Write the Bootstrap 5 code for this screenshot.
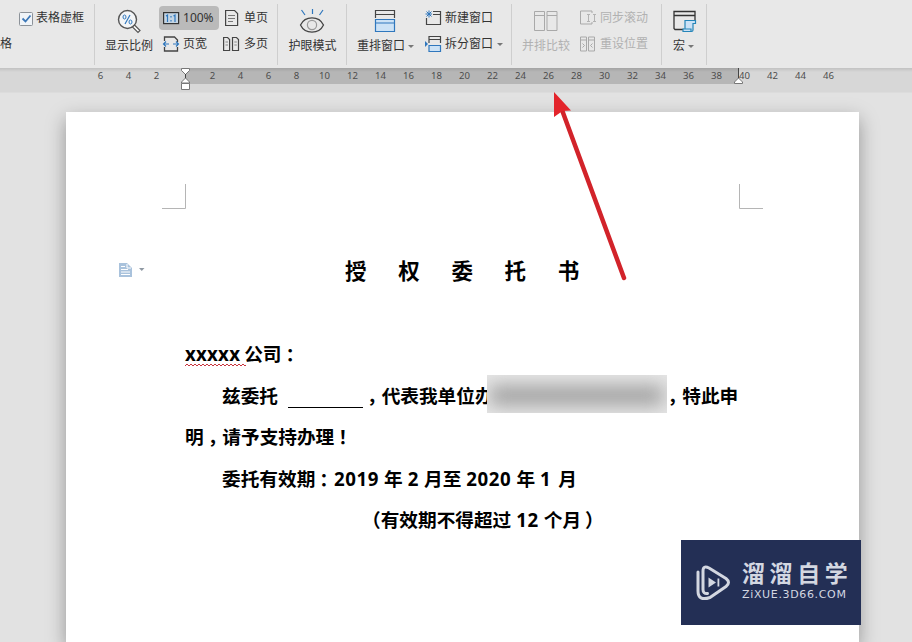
<!DOCTYPE html>
<html lang="zh-CN">
<head>
<meta charset="utf-8">
<meta name="viewport" content="width=device-width, initial-scale=1">
<title>授权委托书</title>
<link href="https://cdn.jsdelivr.net/npm/bootstrap@5.3.0/dist/css/bootstrap.min.css" rel="stylesheet">
<style>
body{width:912px;height:642px;background:#e2e2e2;font-family:"Noto Sans","Noto Sans CJK SC",sans-serif;font-size:12px;line-height:16px;color:#333}
svg{display:block;flex:none;fill:none;overflow:visible}
.ribbon{height:68px;background:#e8e8e8}
.group{flex:none;position:relative;height:68px;box-sizing:border-box}
.group::after{content:"";position:absolute;right:0;top:4px;width:1px;height:61px;background:#cecece}
.g1{width:95px}.g2{width:183px;padding-left:10px}.g3{width:69px}.g4{width:165px;padding-left:10px}.g5{width:150px;padding-left:10px}.g6{width:45px;padding-left:11px}
.tool{height:24px;gap:4px;white-space:nowrap;font-size:12px}
.tool-rows{padding-top:6px;gap:2px}
.zoom-rows{margin-left:6px;width:60px}
.page-rows{margin-left:5px}
.window-rows{margin-left:11px}
.sync-rows{margin-left:10px}
.check-box{margin:0 -1px 0 4px}
.arrange-icon{margin-left:17px}
.tool-big{padding-top:9px;white-space:nowrap}
.tool-big .cap{margin-top:5px}
.cap .tri{margin-left:-1px}
.active-tool{background:#bababa;border-radius:4px}
.off{color:#b1b1b1}
.tri{width:0;height:0;border:3px solid transparent;border-top:3.5px solid #777;border-bottom:0}
.ruler{height:25px;background:#d7d7d7;border-bottom:1px solid #dcdcdc}
.ruler-active{height:16px;margin-left:185px;width:553px;background:#b6b6b6}
.ruler-top{background:linear-gradient(#0000001a,transparent 4px)}
.ticks{top:0;left:86.6px;height:16px}
.ticks span{width:28px;text-align:center;font-size:9.6px;line-height:16px;color:#4d4d4d}
.sheet{margin:19px 0 0 66px;width:793px;height:530px;background:#fff;box-shadow:0 7px 18px #00000058;color:#000}
.doc-body{padding:221px 0 0 119px;font-weight:700;font-size:18.67px}
.doc-line{height:41.5px;line-height:41.5px;white-space:nowrap}
.heading-line{padding-left:279px;padding-top:144px;margin-bottom:-222px;height:222px;font-size:21.5px;line-height:30px;letter-spacing:31.7px;font-weight:700;white-space:nowrap}
.indent{padding-left:37px}.indent-far{padding-left:177px}
.num{margin-right:5px;letter-spacing:.6px}
.pre{margin-right:5px}
.mis-typed{letter-spacing:.25px;margin-right:4px}
.squiggle{top:30px}
.punct{display:inline-block;margin:0 -4px 0 4px}
.after-gap{margin-left:170px}
.last-month{margin-left:2px}
.blank-line{width:75px;height:1.4px;background:#000;margin:0 0 8px 10px;align-self:flex-end}
.redacted{width:180px;height:38px;background:#e6e6e6;left:487px;top:375px;overflow:hidden}
.redacted::before{content:"";position:absolute;inset:11px 4px 8px 3px;background:#9f9f9f;filter:blur(9px)}
.brand-box{left:681px;top:540px;width:180px;height:85px;background:#232f55;color:#d3d7e1;padding:0 0 0 15px}
.brand-text{margin-left:11px}
.brand-name{font:700 23px/23px "Noto Sans CJK SC",sans-serif;letter-spacing:4.6px;white-space:nowrap;margin-top:-4px}
.brand-url{font:11px/13px "DejaVu Sans",sans-serif;letter-spacing:.65px;white-space:nowrap;margin-top:4px}
</style>
<script src="https://cdn.jsdelivr.net/npm/bootstrap@5.3.0/dist/js/bootstrap.bundle.min.js"></script>
</head>
<body class="position-relative overflow-hidden">
<header class="ribbon d-flex">
  <div class="group g1">
    <div class="tool-rows d-flex flex-column">
      <div class="tool d-flex align-items-center ps-3"><svg class="check-box" width="13" height="13"><rect x="-.5" y=".5" width="13" height="13" rx="1" fill="#f0f4f8" stroke="#8c9299"/><path d="M2.5 6.5l3 3 5-6" stroke="#3d78b8" stroke-width="1.8"/></svg><span>表格虚框</span></div>
      <div class="tool d-flex align-items-center">格</div>
    </div>
  </div>
  <div class="group g2 d-flex">
    <div class="tool-big d-flex flex-column align-items-center"><svg width="24" height="24"><circle cx="10.5" cy="10.5" r="9" fill="#f3f5f7" stroke="#555" stroke-width="1.4"/><path d="M17.500 16l5.500 5.500-2 2-5.500-5.500z" fill="#fff" stroke="#555" stroke-width="1.200"/><path d="M13 6l-5 9" stroke="#2f77bd" stroke-width="1.200"/><ellipse cx="7.500" cy="8" rx="1.500" ry="2" stroke="#2f77bd"/><ellipse cx="13.500" cy="13" rx="1.500" ry="2" stroke="#2f77bd"/></svg><span class="cap">显示比例</span></div>
    <div class="tool-rows zoom-rows d-flex flex-column">
      <div class="tool active-tool d-flex align-items-center px-1"><svg width="16" height="16"><rect x=".6" y="2.600" width="15" height="11" fill="#c4d5e4" stroke="#333" stroke-width="1.2"/><path d="M3 6l1.500-1v7M10.500 6l1.500-1v7M8 6v1.500M8 10v1.500" stroke="#2f77bd" stroke-width="1.2"/></svg><span>100%</span></div>
      <div class="tool d-flex align-items-center px-1"><svg width="16" height="16"><path d="M1.500 5V1h10l3 3v2M1.500 11v4h13v-4" stroke="#444" stroke-width="1.3"/><path d="M6 8H.5M3 5.500L.5 8 3 10.500M10 8h5.500M13 5.500L15.500 8 13 10.500" stroke="#2f77bd" stroke-width="1.2"/></svg><span>页宽</span></div>
    </div>
    <div class="tool-rows page-rows d-flex flex-column">
      <div class="tool d-flex align-items-center"><svg width="16" height="16"><path d="M1.600 .5h9l3 3v12h-12z" stroke="#444" stroke-width="1.2"/><path d="M4 5.500h7M4 8.500h7M4 11.500h5" stroke="#777"/></svg><span>单页</span></div>
      <div class="tool d-flex align-items-center"><svg width="16" height="16"><path d="M-.4 1.500h4l2 2v11h-6zM8.500 1.500h4l2 2v11h-6z" stroke="#444" stroke-width="1.2"/><path d="M1.500 6h2.500M1.500 9h2.500M10.300 6h2.500M10.300 9h2.500" stroke="#888"/></svg><span>多页</span></div>
    </div>
  </div>
  <div class="group g3 d-flex justify-content-center">
    <div class="tool-big d-flex flex-column align-items-center"><svg width="24" height="24"><path d="M.5 16C5 6.500 19 6.500 23.500 16 19 25.500 5 25.500.5 16z" stroke="#444" stroke-width="1.3"/><circle cx="12" cy="16" r="4.600" stroke="#999" stroke-width="1.200"/><path d="M1.500 1l3.500 5M12.500 0v5M23 1l-3.500 5" stroke="#2f77bd" stroke-width="1.200"/></svg><span class="cap">护眼模式</span></div>
  </div>
  <div class="group g4 d-flex">
    <div class="tool-big d-flex flex-column"><svg class="arrange-icon" width="24" height="24"><path d="M1.500 9V1.500h19V9M1.500 5.500h19" stroke="#444" stroke-width="1.200"/><path d="M1.500 10.500h19v12h-19zM1.500 14h19" fill="#cce2f6" stroke="#2f77bd" stroke-width="1.200"/></svg><span class="cap d-flex align-items-center gap-1">重排窗口<i class="tri"></i></span></div>
    <div class="tool-rows window-rows d-flex flex-column">
      <div class="tool d-flex align-items-center"><svg width="16" height="16"><path d="M8 1.500h7.500v13h-14V8M8 4.500h7.500" stroke="#444" stroke-width="1.200"/><path d="M.5 4H7M4 .5v7M1.500 1.500l5 5M6.500 1.500l-5 5" stroke="#2f77bd"/></svg><span>新建窗口</span></div>
      <div class="tool d-flex align-items-center"><svg width="16" height="16"><path d="M4 7V.5h11.500V7M4 3.500h11.500" stroke="#444" stroke-width="1.200"/><path d="M4 9.500h11.500v6H4z" fill="#cce2f6" stroke="#2f77bd" stroke-width="1.200"/><path d="M0 5l3 3-3 3z" fill="#2f77bd"/></svg><span>拆分窗口</span><i class="tri"></i></div>
    </div>
  </div>
  <div class="group g5 d-flex off">
    <div class="tool-big d-flex flex-column align-items-center"><svg width="24" height="24"><path d="M.5 2.500h10v19H.5zM13 2.500h10v19H13zM.5 6.500h10M13 6.500h10" stroke="#a9a9a9"/></svg><span class="cap">并排比较</span></div>
    <div class="tool-rows sync-rows d-flex flex-column">
      <div class="tool d-flex align-items-center"><svg width="16" height="16"><path d="M12 3V1H.5v13H12v-2" stroke="#a9a9a9"/><path d="M8.500 4v8M7 4.500h3M7 11.500h3M14.500 4v8M13 4.500h3M13 11.500h3" stroke="#b3b3b3"/></svg><span>同步滚动</span></div>
      <div class="tool d-flex align-items-center"><svg width="16" height="16"><path d="M.5 1h6v14h-6zM8.500 1h6v14h-6zM.5 4h6M8.500 4h6M2.500 7.500L4.500 9.500l-2 2M12.500 7.500l-2 2 2 2" stroke="#a9a9a9"/></svg><span>重设位置</span></div>
    </div>
  </div>
  <div class="group g6">
    <div class="tool-big d-flex flex-column"><svg width="24" height="24"><path d="M11 20.500H2l-1-1V2.500h21V12M1 6.500h21" stroke="#333" stroke-width="1.300"/><path d="M12 19.500v-8h10.500v3H20v6.500q0 1.500-1.500 1.500h-8.500v-2.500h8v2.500" fill="#cce2f6" stroke="#2585b8" stroke-width="1.200"/></svg><span class="cap d-flex align-items-center gap-1">宏<i class="tri"></i></span></div>
  </div>
</header>
<div class="ruler position-relative">
  <div class="ruler-active"></div>
  <div class="ticks d-flex position-absolute"><span>6</span><span>4</span><span>2</span><span></span><span>2</span><span>4</span><span>6</span><span>8</span><span>10</span><span>12</span><span>14</span><span>16</span><span>18</span><span>20</span><span>22</span><span>24</span><span>26</span><span>28</span><span>30</span><span>32</span><span>34</span><span>36</span><span>38</span><span>40</span><span>42</span><span>44</span><span>46</span></div>
  <div class="ruler-top position-absolute top-0 start-0 w-100 h-100"></div>
  <svg class="position-absolute top-0 start-0" width="912" height="25"><g fill="#fff" stroke="#777"><path d="M181.500.5h8v2l-4 4-4-4zM185.500 10l4 4v1h-8v-1zM181.500 15.500h8v6h-8zM738.500 10l4 4v1.500h-8V14z"/></g><path d="M185.500 6v4M738.500 0v10" stroke="#444"/></svg>
</div>
<main class="sheet position-relative">
  <svg class="position-absolute top-0 start-0" width="793" height="200"><path d="M96 96.500h23.500V72M697 96.500h-23.500V72" stroke="#b5b5b5"/><g transform="translate(53 151)"><path d="M0 0h8l5 5v9H0z" fill="#a9c2dc"/><path d="M2 3.500h4M2 6.500h7M2 9h9M2 11.500h9M8 1v4h4" stroke="#fff"/><path d="M20 5h5.500l-2.750 3z" fill="#8f99a3"/></g></svg>
  <div class="heading-line">授权委托书</div>
  <div class="doc-body">
    <div class="doc-line d-flex position-relative"><span class="mis-typed">xxxxx</span><span>公司<span class="punct">：</span></span>
      <svg class="squiggle position-absolute start-0" width="62" height="4"><defs><pattern id="wave" width="4" height="4" patternUnits="userSpaceOnUse"><path d="M0 3l2-2 2 2" stroke="#c8323c" fill="none"/></pattern></defs><rect width="61" height="4" fill="url(#wave)"/></svg>
    </div>
    <div class="doc-line d-flex indent"><span>兹委托</span><i class="blank-line"></i><span><span class="punct">，</span>代表我单位办</span><span class="after-gap"><span class="punct">，</span>特此申</span></div>
    <div class="doc-line">明<span class="punct">，</span>请予支持办理<span class="punct">！</span></div>
    <div class="doc-line d-flex indent"><span>委托有效期<span class="punct">：</span></span><span class="num">2019</span><span class="pre">年</span><span class="num">2</span><span class="pre">月至</span><span class="num">2020</span><span class="pre">年</span><span class="num">1</span><span class="last-month">月</span></div>
    <div class="doc-line d-flex indent-far"><span class="pre">（有效期不得超过</span><span class="num">12</span><span>个月<span class="punct">）</span></span></div>
  </div>
</main>
<div class="redacted position-absolute"></div>
<svg class="position-absolute top-0 start-0" width="912" height="300"><path d="M562 110L624 278" stroke="#d2232a" stroke-width="4.500" stroke-linecap="round"/><path d="M554 92l17 18.500-8.500.5-8.500 6z" fill="#e3242b"/></svg>
<div class="brand-box position-absolute d-flex align-items-center">
  <svg width="35" height="37"><g stroke="#d3d7e1" stroke-width="3" stroke-linecap="round" stroke-linejoin="round"><path d="M11.500 29.500q-4.500.5-4.500-4V7q0-6 6-3l17 10.500q5 4 0 8L14 33.500q-12 4-12-6.500V8"/></g><path d="M12.500 13.500l7.500 5-7.500 5zM21.500 14.500h1.800v8h-1.800z" fill="#d3d7e1"/></svg>
  <div class="brand-text"><div class="brand-name">溜溜自学</div><div class="brand-url">ZiXUE.3D66.COM</div></div>
</div>
</body>
</html>
